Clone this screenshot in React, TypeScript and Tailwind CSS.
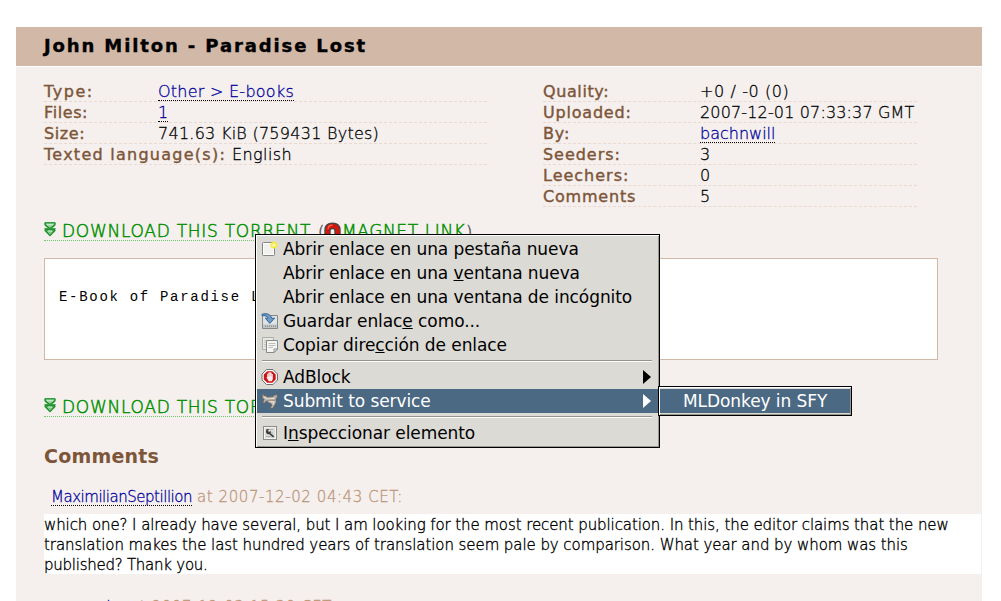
import type { ReactNode } from 'react';

function Label({ children, className }: { children: ReactNode; className: string }) {
  return (
    <span className={`shrink-0 font-normal text-[#7d5538] [-webkit-text-stroke:0.4px_#7d5538] ${className}`}>{children}</span>
  );
}

function Row({ children }: { children: ReactNode }) {
  return (
    <div className="flex h-[21px] border-b border-dashed border-[#e8dad0] leading-[22px]">{children}</div>
  );
}

function DownArrows() {
  return (
    <svg width="12" height="15" viewBox="0 0 12 15" className="mt-px shrink-0">
      <path d="M0.5 0.5H11.5V3.5L8.5 6H11.5V9L6 14.5L0.5 9V6H3.5L0.5 3.5Z" fill="#3f9c49" />
      <path d="M1 0.8H11V2.5L6 6.5L1 2.5Z" fill="#8fce94" stroke="#0b8a1a" strokeWidth="1" />
      <path d="M3 2.8H9" fill="none" stroke="#d9f2da" strokeWidth="1" />
      <path d="M1 8H11L6 13.6Z" fill="#7cc383" stroke="#0b8a1a" strokeWidth="1" />
      <path d="M4 9H8" fill="none" stroke="#d9f2da" strokeWidth="1" />
    </svg>
  );
}

function Magnet() {
  return (
    <svg width="17" height="17" viewBox="0 0 17 17" className="mt-px shrink-0">
      <path
        d="M1 16V8C1 3.5 4 1.2 8.5 1.2S16 3.5 16 8V16H11V8.5C11 5.8 6 5.8 6 8.5V16Z"
        fill="#d9150b"
        stroke="#4f4444"
        strokeWidth="1.4"
      />
      <path d="M4 7C4.3 4.5 6 3.2 8.5 3.2" fill="none" stroke="#ff6a4a" strokeWidth="1.2" />
    </svg>
  );
}

function NewTabIcon() {
  return (
    <svg width="17" height="16" viewBox="0 0 17 16">
      <rect x="1.5" y="1.5" width="12" height="13" rx="1" fill="#f1f1ef" stroke="#858582" />
      <rect x="2.5" y="2.5" width="10" height="11" fill="none" stroke="#fff" />
      <circle cx="13" cy="4" r="3.6" fill="#f7ea3e" opacity="0.9" />
      <circle cx="13" cy="4" r="1.6" fill="#fffbb0" />
    </svg>
  );
}

function SaveIcon() {
  return (
    <svg width="17" height="16" viewBox="0 0 17 16">
      <path d="M1.5 2.5H16.5V15.5H1.5Z" fill="#dfe3e4" stroke="#85898a" />
      <path d="M2 11.5H16V15H2Z" fill="#c2c5c5" />
      <path d="M4 13.3H15" stroke="#8e9292" strokeWidth="1.4" strokeDasharray="1 1" />
      <path
        d="M1 1.2C5 -0.3 10 1.2 10.6 5.2H13.6L8.8 10.4L4.3 5.2H7C6.6 3.3 4 2.2 1 2.8Z"
        fill="#6d9dc6"
        stroke="#2c5f8d"
        strokeWidth="0.9"
      />
    </svg>
  );
}

function CopyIcon() {
  return (
    <svg width="17" height="16" viewBox="0 0 17 16">
      <path d="M1.5 0.5H12.5V12.5H1.5Z" fill="#e8e8e5" stroke="#adada9" />
      <path d="M3 3.5H6M3 5.5H5M3 7.5H5M3 9.5H5" stroke="#c5c5c1" />
      <path d="M5.5 3.5H16.5V12L13 15.5H5.5Z" fill="#f5f5f3" stroke="#898985" />
      <path d="M7.5 6.5H14.5M7.5 8.5H14.5M7.5 10.5H12" stroke="#bdbdb9" />
      <path d="M13 15.5V12H16.5Z" fill="#fff" stroke="#898985" />
    </svg>
  );
}

function AdBlockIcon() {
  return (
    <svg width="17" height="16" viewBox="0 0 17 16">
      <path d="M5.5 0.5H12L16.5 5V11L12 15.5H5.5L1 11V5Z" fill="#fafafa" stroke="#73706c" />
      <path d="M6.3 2.2H11.3L14.7 5.6V10.4L11.3 13.8H6.3L2.8 10.4V5.6Z" fill="#cd1417" />
      <path
        d="M5.4 8.5L6.2 8V4.7H7.3V3.6H8.5V3.2H9.6V3.7H10.7V4.9H11.8V10.2L10.6 12.3H7.8Z"
        fill="#f8eeee"
      />
      <path d="M7.4 5V7.4M8.8 4.2V7.4M10.3 4.8V7.4" stroke="#d98584" strokeWidth="0.5" />
    </svg>
  );
}

function DonkeyIcon() {
  return (
    <svg width="17" height="16" viewBox="0 0 17 16">
      <path
        d="M1.3 0.6L3.5 3L5 2.6L6 4L9 3.8L12 3.6L13.5 2L16 1.5L16.4 4L15 6L15.2 9.5L13.5 12.5L11.5 15.5L9.3 15.3L10.8 12L9.5 10.3L7.5 10L6.5 8.5L5 8.2L3.5 10.2L1.8 9.5L3 6.5L1.2 4.5Z"
        fill="#b9b0a4"
        stroke="#5f5b57"
        strokeWidth="0.6"
      />
      <path d="M3 4L6 6L13.5 5.3M8.5 8.3L13 8.8L12 11.5" fill="none" stroke="#e6dfd5" strokeWidth="1.2" />
      <path d="M6 7.3L11 7.2L14 7.3" fill="none" stroke="#77706a" strokeWidth="0.6" />
    </svg>
  );
}

function InspectIcon() {
  return (
    <svg width="17" height="16" viewBox="0 0 17 16">
      <rect x="2.5" y="1.5" width="13" height="13" fill="#f3f3f1" stroke="#8b8b87" />
      <rect x="4" y="3" width="10" height="10" fill="#dcdcda" />
      <path d="M5 4.5H12M5 8H12M5 11.5H10" stroke="#b2b2ae" />
      <path
        d="M5 6.4C5 4.5 6.6 3.7 8 4.3L6.9 5.8L8 7L9.7 6C10.1 7 9.8 7.8 9.5 8.2L13.3 11.2L12 12.5L8.4 9.3C6.5 9.6 5 8.3 5 6.4Z"
        fill="#3d3d3b"
      />
    </svg>
  );
}

function SubArrow() {
  return (
    <svg width="8" height="14" viewBox="0 0 8 14" className="mr-[7px] ml-auto">
      <path d="M0 0L8 7L0 14Z" fill="currentColor" />
    </svg>
  );
}

function Item({
  icon,
  children,
  arrow,
  selected,
}: {
  icon?: ReactNode;
  children: ReactNode;
  arrow?: boolean;
  selected?: boolean;
}) {
  return (
    <div className={`flex h-[24px] items-center pl-[4px] ${selected ? 'bg-[#4b6983] text-white' : 'text-black'}`}>
      <span className="w-[22px] shrink-0">{icon}</span>
      <span className="leading-[24px] whitespace-pre">{children}</span>
      {arrow && <SubArrow />}
    </div>
  );
}

function Key({ children }: { children: ReactNode }) {
  return <span className="underline decoration-1 underline-offset-[1px] [text-decoration-skip-ink:none]">{children}</span>;
}

function Separator() {
  return <div className="mt-[3px] mr-[6px] mb-[3px] ml-[5px] h-[2px] border-t border-b border-t-[#96938c] border-b-white" />;
}

const menuFrame =
  'border border-black bg-[#dcdad5] shadow-[inset_1px_1px_0_#ffffff,inset_-1px_-1px_0_#9a978f]';

function ContextMenu() {
  return (
    <div className="absolute top-[234px] left-[255px] text-[17px] tracking-[-0.08px]">
      <div className={`h-[214px] w-[405px] px-px py-[2px] ${menuFrame}`}>
        <Item icon={<NewTabIcon />}>Abrir enlace en una pestaña nueva</Item>
        <Item>
          Abrir enlace en una <Key>v</Key>entana nueva
        </Item>
        <Item>Abrir enlace en una ventana de incógnito</Item>
        <Item icon={<SaveIcon />}>
          Guardar enlac<Key>e</Key> como...
        </Item>
        <Item icon={<CopyIcon />}>
          Copiar dire<Key>c</Key>ción de enlace
        </Item>
        <Separator />
        <Item icon={<AdBlockIcon />} arrow>
          AdBlock
        </Item>
        <Item icon={<DonkeyIcon />} arrow selected>
          Submit to service
        </Item>
        <Separator />
        <Item icon={<InspectIcon />}>
          I<Key>n</Key>speccionar elemento
        </Item>
      </div>
      <div className={`absolute top-[152px] left-[403px] h-[30px] w-[194px] px-px py-[2px] ${menuFrame}`}>
        <div className="h-[24px] bg-[#4b6983] pl-[23px] leading-[24px] whitespace-nowrap text-white">
          MLDonkey in SFY
        </div>
      </div>
    </div>
  );
}

function Download() {
  return (
    <div className="flex">
      <div className="flex h-[20px] border-b border-dotted border-[#6cc46c] text-[17px] leading-[21px] font-extralight text-[#009000] [-webkit-text-stroke:0.5px]">
        <DownArrows />
        <span className="ml-[6px] w-[256px] tracking-[0.73px] whitespace-nowrap">DOWNLOAD THIS TORRENT</span>
        <span className="w-[6px] text-[16px] text-[#555]">(</span>
        <Magnet />
        <span className="ml-px w-[124px] tracking-[0.62px] whitespace-nowrap">MAGNET LINK</span>
        <span className="text-[16px] text-[#555]">)</span>
      </div>
    </div>
  );
}

const link = 'h-[20px] border-b border-dotted border-black text-[#00009c]';

export default function App() {
  return (
    <div className="relative h-[601px] w-[1001px] overflow-hidden bg-white pt-[27px] pr-[19px] pl-[16px] font-['DejaVu_Sans',sans-serif] text-black">
      <h1 className="h-[39px] bg-[#d2b8a6] pl-[28px] text-[18px] leading-[38px] font-bold tracking-[1.88px] [-webkit-text-stroke:0.4px_black]">
        John Milton - Paradise Lost
      </h1>
      <main className="mt-px h-[540px] bg-[#f5f0ee] pt-[14px] pl-[28px]">
        <div className="flex text-[16px] font-extralight whitespace-nowrap [-webkit-text-stroke:0.3px]">
          <div className="w-[443px]">
            <Row>
              <Label className="w-[114px] tracking-[1.5px]">Type:</Label>
              <a className={`${link} tracking-[0.25px]`}>Other &gt; E-books</a>
            </Row>
            <Row>
              <Label className="w-[114px] tracking-[0.6px]">Files:</Label>
              <a className={link}>1</a>
            </Row>
            <Row>
              <Label className="w-[114px] tracking-[0.6px]">Size:</Label>
              <span className="tracking-[0.26px]">741.63 KiB (759431 Bytes)</span>
            </Row>
            <Row>
              <Label className="w-[188px] tracking-[1.26px]">Texted language(s):</Label>
              <span className="tracking-[0.4px]">English</span>
            </Row>
          </div>
          <div className="ml-[56px] w-[374px]">
            <Row>
              <Label className="w-[157px] tracking-[0.6px]">Quality:</Label>
              <span className="tracking-[0.6px]">+0 / -0 (0)</span>
            </Row>
            <Row>
              <Label className="w-[157px] tracking-[0.8px]">Uploaded:</Label>
              <span className="tracking-[0.15px]">2007-12-01 07:33:37 GMT</span>
            </Row>
            <Row>
              <Label className="w-[157px] tracking-[0.8px]">By:</Label>
              <a className={link}>bachnwill</a>
            </Row>
            <Row>
              <Label className="w-[157px] tracking-[0.96px]">Seeders:</Label>
              <span>3</span>
            </Row>
            <Row>
              <Label className="w-[157px] tracking-[1px]">Leechers:</Label>
              <span>0</span>
            </Row>
            <Row>
              <Label className="w-[157px] tracking-[0.8px]">Comments</Label>
              <span>5</span>
            </Row>
          </div>
        </div>

        <div className="mt-[14px]">
          <Download />
        </div>
        <pre className="mt-[17px] h-[102px] w-[894px] border border-[#d2b8a6] bg-white pt-[28px] pl-[14px] font-['Liberation_Mono',monospace] text-[14px] leading-[20px] tracking-[1.7px]">
          E-Book of Paradise Lost
        </pre>
        <div className="mt-[37px]">
          <Download />
        </div>

        <h2 className="mt-[28px] h-[22px] text-[19px] leading-[22px] font-bold tracking-[0.2px] text-[#7d5538]">
          Comments
        </h2>
        <div className="mt-[20px] flex h-[20px] pl-[7px] text-[15px] leading-[20px] font-extralight whitespace-nowrap [-webkit-text-stroke:0.3px]">
          <a className="h-[19px] w-[141px] border-b border-dotted border-black tracking-[-0.475px] text-[#00009c]">
            MaximilianSeptillion
          </a>
          <span className="ml-[5px] tracking-[0.57px] text-[#bd9679]">at 2007-12-02 04:43 CET:</span>
        </div>
        <div className="mt-[7px] h-[60px] w-[937px] bg-white pt-px text-[15px] leading-[20px] font-extralight tracking-[-0.09px] whitespace-nowrap [-webkit-text-stroke:0.35px]">
          <p>
            which one? I already have several, but I am looking for the most recent publication. In this, the editor
            claims that the new
          </p>
          <p className="tracking-[-0.07px]">
            translation makes the last hundred years of translation seem pale by comparison. What year and by whom was
            this
          </p>
          <p className="tracking-[-0.25px]">published? Thank you.</p>
        </div>
        <div className="mt-[23px] flex pl-[7px] text-[15px] leading-[20px] font-extralight whitespace-nowrap [-webkit-text-stroke:0.3px]">
          <a className="w-[79px] tracking-[-0.5px] text-[#00009c]">moonraker</a>
          <span className="tracking-[0.57px] text-[#bd9679]">at 2007-12-03 15:30 CET:</span>
        </div>
      </main>
      <ContextMenu />
    </div>
  );
}
